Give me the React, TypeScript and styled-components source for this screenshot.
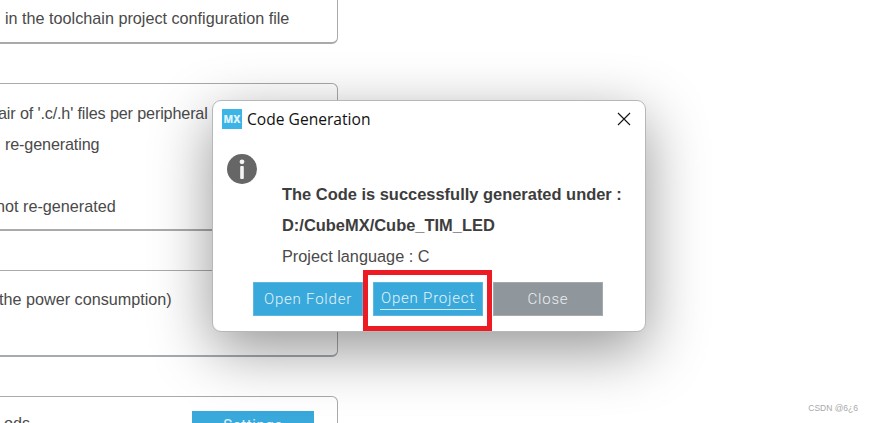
import React from 'react';
import styled, { createGlobalStyle } from 'styled-components';

const GlobalStyle = createGlobalStyle`
  html, body {
    margin: 0;
    padding: 0;
    background: #fff;
  }
`;

const Page = styled.div`
  position: relative;
  width: 873px;
  height: 423px;
  overflow: hidden;
  background: #fff;
  font-family: 'Liberation Sans', Arial, sans-serif;
`;
const PanelColumn = styled.div`
  display: flex;
  flex-direction: column;
  gap: 39px;
  width: 348px;
  margin: -17px 0 0 -10px;
`;
const Panel = styled.section<{ height: number; top: number }>`
  box-sizing: border-box;
  height: ${({ height }) => height}px;
  flex: none;
  padding-top: ${({ top }) => top}px;
  border: 1px solid #a7abae;
  border-bottom-width: 2px;
  border-radius: 6px;
  background: #fff;
`;
const Line = styled.div<{ indent?: number; tight?: boolean }>`
  height: 31px;
  margin-left: ${({ indent = 0 }) => indent + 10}px;
  color: #4a4a4a;
  font-size: 16.2px;
  letter-spacing: ${({ tight }) => (tight ? '-0.15px' : '0')};
  line-height: 31px;
  white-space: nowrap;
`;
const ClippedLine = styled(Line)`
  line-height: 24px;
`;
const SettingsRow = styled.div`
  display: flex;
  justify-content: space-between;
  align-items: flex-start;
  padding-right: 23px;
`;
const SettingsButton = styled.div`
  width: 122px;
  height: 34px;
  background: #39a9dc;
  color: #e4f2f9;
  font-family: Roboto, sans-serif;
  font-size: 15px;
  letter-spacing: 0.6px;
  line-height: 28px;
  text-align: center;
`;
const Modal = styled.div`
  position: absolute;
  left: 212px;
  top: 100px;
  box-sizing: border-box;
  width: 434px;
  height: 232px;
  padding: 8px 9px 0;
  border: 1px solid #b5b8ba;
  border-radius: 9px;
  background: #fff;
  box-shadow: 0 18px 60px rgba(0, 0, 0, 0.42);
`;
const TitleBar = styled.header`
  display: flex;
  align-items: center;
  height: 20px;
`;
const Logo = styled.div`
  flex: none;
  width: 20px;
  height: 20px;
  background: #3cb4e6;
  color: #dff3fb;
  font-family: 'Open Sans', sans-serif;
  font-size: 10px;
  font-weight: 800;
  line-height: 20px;
  text-align: center;
`;
const Title = styled.h1`
  flex: 1;
  margin: 0 0 0 5px;
  color: #111;
  font-family: 'Open Sans', sans-serif;
  font-size: 15.6px;
  font-weight: 400;
`;
const CloseIcon = styled.svg`
  display: block;
  margin-right: 5px;
`;
const Body = styled.div`
  display: flex;
  height: 128px;
  margin-top: 25px;
  padding-left: 5px;
`;
const InfoIcon = styled.svg`
  flex: none;
  display: block;
`;
const Message = styled.div`
  display: flex;
  flex-direction: column;
  padding: 25px 0 0 25px;
`;
const MessageLine = styled.div<{ bold?: boolean }>`
  height: 31px;
  color: ${({ bold }) => (bold ? '#3d3d3d' : '#4a4a4a')};
  font-size: ${({ bold }) => (bold ? '16.45px' : '16.3px')};
  font-weight: ${({ bold }) => (bold ? 700 : 400)};
  line-height: 31px;
  white-space: nowrap;
`;
const Actions = styled.div`
  display: flex;
  gap: 10px;
  margin-left: 31px;
`;
const ActionButton = styled.button<{ muted?: boolean }>`
  box-sizing: border-box;
  width: 110px;
  height: 34px;
  padding: 0;
  border: 1px solid ${({ muted }) => (muted ? '#a4abb0' : '#5cb8e2')};
  background: ${({ muted }) => (muted ? '#8f979d' : '#39a9dc')};
  color: ${({ muted }) => (muted ? '#eceeef' : '#e4f2f9')};
  font-family: Roboto, sans-serif;
  font-size: 15px;
  letter-spacing: 0.8px;
  font-weight: 300;
`;
const FocusLabel = styled.span`
  display: inline-block;
  padding: 0 1px 2px;
  border-bottom: 1px solid #cfe9f6;
`;
const Highlight = styled.div`
  position: absolute;
  left: 363px;
  top: 270px;
  box-sizing: border-box;
  width: 129px;
  height: 61px;
  border: 5px solid #ed1c24;
`;
const Watermark = styled.div`
  position: absolute;
  right: 15px;
  top: 403px;
  color: #a9a9a9;
  font-size: 8.5px;
`;

const App = () => (
  <Page>
    <GlobalStyle />
    <PanelColumn>
      <Panel height={61} top={19}>
        <Line indent={4}>in the toolchain project configuration file</Line>
      </Panel>
      <Panel height={148} top={14}>
        <Line indent={-3} tight>
          air of '.c/.h' files per peripheral
        </Line>
        <Line indent={4} tight>
          re-generating
        </Line>
        <Line />
        <Line indent={-5}>not re-generated</Line>
      </Panel>
      <Panel height={87} top={13}>
        <Line indent={-2}>the power consumption)</Line>
      </Panel>
      <Panel height={60} top={14}>
        <SettingsRow>
          <ClippedLine indent={3}>ods</ClippedLine>
          <SettingsButton>Settings</SettingsButton>
        </SettingsRow>
      </Panel>
    </PanelColumn>
    <Modal>
      <TitleBar>
        <Logo>MX</Logo>
        <Title>Code Generation</Title>
        <CloseIcon width="14" height="14" viewBox="0 0 14 14">
          <path d="M1 1l12 12M13 1L1 13" stroke="#111" strokeWidth="1.1" fill="none" />
        </CloseIcon>
      </TitleBar>
      <Body>
        <InfoIcon width="30" height="30" viewBox="0 0 30 30">
          <circle cx="15" cy="15" r="15" fill="#666" />
          <circle cx="15" cy="7.8" r="2.4" fill="#f4f4f4" />
          <rect x="13.2" y="12" width="3.6" height="13" rx="1" fill="#f4f4f4" />
        </InfoIcon>
        <Message>
          <MessageLine bold>The Code is successfully generated under :</MessageLine>
          <MessageLine bold>D:/CubeMX/Cube_TIM_LED</MessageLine>
          <MessageLine>Project language : C</MessageLine>
        </Message>
      </Body>
      <Actions>
        <ActionButton>Open Folder</ActionButton>
        <ActionButton>
          <FocusLabel>Open Project</FocusLabel>
        </ActionButton>
        <ActionButton muted>Close</ActionButton>
      </Actions>
    </Modal>
    <Highlight />
    <Watermark>CSDN @6¿6</Watermark>
  </Page>
);

export default App;
